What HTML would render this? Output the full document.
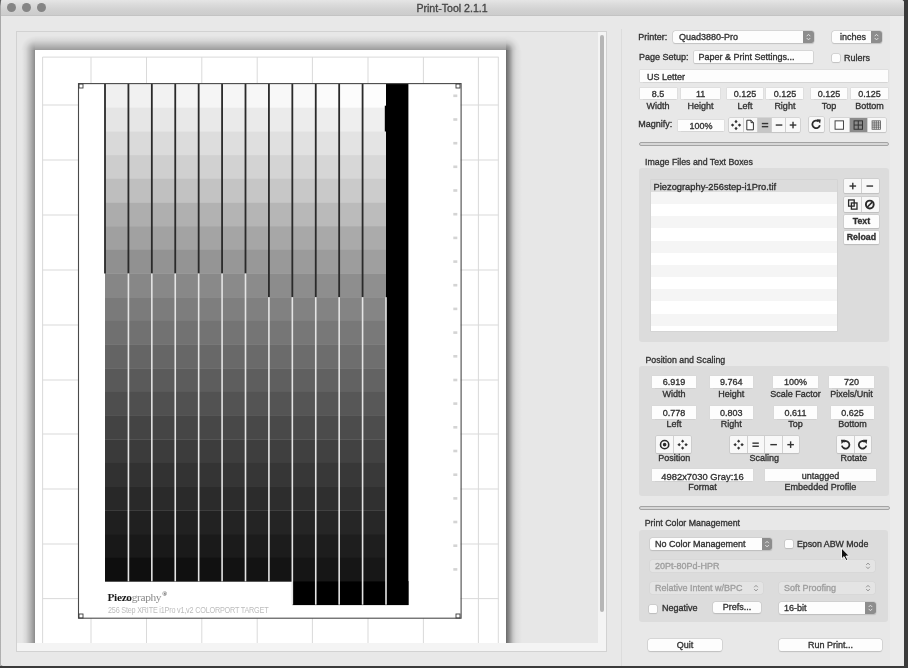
<!DOCTYPE html>
<html><head><meta charset="utf-8"><style>
*{box-sizing:border-box;margin:0;padding:0}
html,body{width:908px;height:668px;overflow:hidden;background:#3b3b3b;font-family:"Liberation Sans",sans-serif;position:relative}
.abs{position:absolute}
.t{position:absolute;white-space:nowrap;line-height:1;-webkit-text-stroke:0.32px currentColor}
#rp{position:absolute;left:0;top:0;width:908px;height:668px;will-change:transform}
</style></head><body>
<div id="rp"><div class="abs" style="left:0;top:0;width:904px;height:666px;background:#e8e8e8;border-radius:3px"></div>
<div class="abs" style="left:0.0px;top:0.0px;width:904.0px;height:16.0px;background:linear-gradient(#e5e5e5 0px,#dadada 5px,#d1d1d1 10px,#cccccc 15px);border-radius:3px 3px 0 0;border-bottom:1px solid #c3c3c3"></div>
<div class="abs" style="left:0.0px;top:0.0px;width:1.2px;height:666.0px;background:linear-gradient(#555 0px,#a8a8a8 6px,#b0b0b0)"></div>
<div class="abs" style="left:890.0px;top:16.0px;width:13.8px;height:650.0px;background:#ebebeb"></div>
<div class="abs" style="left:6.6px;top:2.6px;width:9.2px;height:9.2px;border-radius:50%;background:#858585"></div>
<div class="abs" style="left:21.9px;top:2.6px;width:9.2px;height:9.2px;border-radius:50%;background:#858585"></div>
<div class="abs" style="left:37.2px;top:2.6px;width:9.2px;height:9.2px;border-radius:50%;background:#858585"></div>
<div class="t" style="left:416.4px;top:2.5px;font-size:10.6px;color:#454545;font-weight:400;">Print-Tool 2.1.1</div>
<div class="abs" style="left:16.0px;top:31.0px;width:591.0px;height:621.0px;border:1px solid #d2d2d2;background:#f4f4f4"></div>
<div class="abs" style="left:17.0px;top:32.0px;width:581.0px;height:611.0px;background:#e7e7e7"></div>
<div class="abs" style="left:599.7px;top:34.5px;width:4.5px;height:577.3px;background:#b6b6b6;border-radius:2.3px"></div>
<div class="abs" style="left:620.5px;top:29.0px;width:1.8px;height:637.0px;background:#dcdcdc"></div>
<div class="abs" style="left:17px;top:32px;width:581px;height:611px;overflow:hidden"><div class="abs" style="left:18px;top:17.6px;width:471px;height:620px;background:#fff"></div><div class="abs" style="left:489px;top:17.6px;width:16px;height:600px;background:linear-gradient(to right,rgba(0,0,0,0.54) 0px,rgba(0,0,0,0.40) 3px,rgba(0,0,0,0.27) 5px,rgba(0,0,0,0.143) 7px,rgba(0,0,0,0.052) 10px,rgba(0,0,0,0.017) 14px,rgba(0,0,0,0) 16px)"></div><div class="abs" style="left:4px;top:17.6px;width:14px;height:600px;background:linear-gradient(to left,rgba(0,0,0,0.40) 0px,rgba(0,0,0,0.24) 4px,rgba(0,0,0,0.065) 9px,rgba(0,0,0,0) 13px)"></div><div class="abs" style="left:18px;top:2.6px;width:471px;height:15px;background:linear-gradient(to top,rgba(0,0,0,0.33) 0px,rgba(0,0,0,0.20) 4.6px,rgba(0,0,0,0.065) 9.6px,rgba(0,0,0,0) 14.6px)"></div><div class="abs" style="left:4px;top:2.6px;width:14px;height:15px;background:radial-gradient(circle at 100% 100%,rgba(0,0,0,0.36) 0px,rgba(0,0,0,0.22) 4.3px,rgba(0,0,0,0.065) 9.3px,rgba(0,0,0,0) 14px)"></div><div class="abs" style="left:489px;top:2.6px;width:16px;height:15px;background:radial-gradient(circle at 0% 100%,rgba(0,0,0,0.45) 0px,rgba(0,0,0,0.30) 4px,rgba(0,0,0,0.14) 7px,rgba(0,0,0,0.04) 11px,rgba(0,0,0,0) 15px)"></div>
<svg class="abs" style="left:-17px;top:-32px" width="908" height="668" viewBox="0 0 908 668"><rect x="42.1" y="57" width="1" height="586" fill="#dadada"/><rect x="90.5" y="57" width="1" height="586" fill="#dadada"/><rect x="146.0" y="57" width="1" height="586" fill="#dadada"/><rect x="201.3" y="57" width="1" height="586" fill="#dadada"/><rect x="256.7" y="57" width="1" height="586" fill="#dadada"/><rect x="311.9" y="57" width="1" height="586" fill="#dadada"/><rect x="367.5" y="57" width="1" height="586" fill="#dadada"/><rect x="422.9" y="57" width="1" height="586" fill="#dadada"/><rect x="477.9" y="57" width="1" height="586" fill="#dadada"/><rect x="497.8" y="57" width="1" height="586" fill="#dadada"/><rect x="42.6" y="56.6" width="456" height="1" fill="#dadada"/><rect x="42.6" y="104.5" width="456" height="1" fill="#dadada"/><rect x="42.6" y="159.5" width="456" height="1" fill="#dadada"/><rect x="42.6" y="214.5" width="456" height="1" fill="#dadada"/><rect x="42.6" y="269.5" width="456" height="1" fill="#dadada"/><rect x="42.6" y="324.5" width="456" height="1" fill="#dadada"/><rect x="42.6" y="379.5" width="456" height="1" fill="#dadada"/><rect x="42.6" y="433.5" width="456" height="1" fill="#dadada"/><rect x="42.6" y="488.5" width="456" height="1" fill="#dadada"/><rect x="42.6" y="543.5" width="456" height="1" fill="#dadada"/><rect x="42.6" y="598.1" width="456" height="1" fill="#dadada"/><rect x="78.5" y="83.5" width="382" height="534.5" fill="#fff"/><rect x="105.00" y="84.00" width="23.72" height="23.99" fill="rgb(240,240,240)"/><rect x="128.42" y="84.00" width="23.72" height="23.99" fill="rgb(241,241,241)"/><rect x="151.83" y="84.00" width="23.72" height="23.99" fill="rgb(242,242,242)"/><rect x="175.25" y="84.00" width="23.72" height="23.99" fill="rgb(244,244,244)"/><rect x="198.67" y="84.00" width="23.72" height="23.99" fill="rgb(245,245,245)"/><rect x="222.08" y="84.00" width="23.72" height="23.99" fill="rgb(246,246,246)"/><rect x="245.50" y="84.00" width="23.72" height="23.99" fill="rgb(247,247,247)"/><rect x="268.92" y="84.00" width="23.72" height="23.99" fill="rgb(248,248,248)"/><rect x="292.33" y="84.00" width="23.72" height="23.99" fill="rgb(249,249,249)"/><rect x="315.75" y="84.00" width="23.72" height="23.99" fill="rgb(251,251,251)"/><rect x="339.17" y="84.00" width="23.72" height="23.99" fill="rgb(252,252,252)"/><rect x="362.58" y="84.00" width="23.72" height="23.99" fill="rgb(253,253,253)"/><rect x="105.00" y="107.69" width="23.72" height="23.99" fill="rgb(229,229,229)"/><rect x="128.42" y="107.69" width="23.72" height="23.99" fill="rgb(230,230,230)"/><rect x="151.83" y="107.69" width="23.72" height="23.99" fill="rgb(231,231,231)"/><rect x="175.25" y="107.69" width="23.72" height="23.99" fill="rgb(232,232,232)"/><rect x="198.67" y="107.69" width="23.72" height="23.99" fill="rgb(233,233,233)"/><rect x="222.08" y="107.69" width="23.72" height="23.99" fill="rgb(234,234,234)"/><rect x="245.50" y="107.69" width="23.72" height="23.99" fill="rgb(234,234,234)"/><rect x="268.92" y="107.69" width="23.72" height="23.99" fill="rgb(235,235,235)"/><rect x="292.33" y="107.69" width="23.72" height="23.99" fill="rgb(236,236,236)"/><rect x="315.75" y="107.69" width="23.72" height="23.99" fill="rgb(237,237,237)"/><rect x="339.17" y="107.69" width="23.72" height="23.99" fill="rgb(238,238,238)"/><rect x="362.58" y="107.69" width="23.72" height="23.99" fill="rgb(239,239,239)"/><rect x="105.00" y="131.37" width="23.72" height="23.99" fill="rgb(217,217,217)"/><rect x="128.42" y="131.37" width="23.72" height="23.99" fill="rgb(218,218,218)"/><rect x="151.83" y="131.37" width="23.72" height="23.99" fill="rgb(219,219,219)"/><rect x="175.25" y="131.37" width="23.72" height="23.99" fill="rgb(220,220,220)"/><rect x="198.67" y="131.37" width="23.72" height="23.99" fill="rgb(221,221,221)"/><rect x="222.08" y="131.37" width="23.72" height="23.99" fill="rgb(222,222,222)"/><rect x="245.50" y="131.37" width="23.72" height="23.99" fill="rgb(223,223,223)"/><rect x="268.92" y="131.37" width="23.72" height="23.99" fill="rgb(224,224,224)"/><rect x="292.33" y="131.37" width="23.72" height="23.99" fill="rgb(225,225,225)"/><rect x="315.75" y="131.37" width="23.72" height="23.99" fill="rgb(226,226,226)"/><rect x="339.17" y="131.37" width="23.72" height="23.99" fill="rgb(227,227,227)"/><rect x="362.58" y="131.37" width="23.72" height="23.99" fill="rgb(228,228,228)"/><rect x="105.00" y="155.06" width="23.72" height="23.99" fill="rgb(205,205,205)"/><rect x="128.42" y="155.06" width="23.72" height="23.99" fill="rgb(206,206,206)"/><rect x="151.83" y="155.06" width="23.72" height="23.99" fill="rgb(207,207,207)"/><rect x="175.25" y="155.06" width="23.72" height="23.99" fill="rgb(208,208,208)"/><rect x="198.67" y="155.06" width="23.72" height="23.99" fill="rgb(209,209,209)"/><rect x="222.08" y="155.06" width="23.72" height="23.99" fill="rgb(210,210,210)"/><rect x="245.50" y="155.06" width="23.72" height="23.99" fill="rgb(211,211,211)"/><rect x="268.92" y="155.06" width="23.72" height="23.99" fill="rgb(212,212,212)"/><rect x="292.33" y="155.06" width="23.72" height="23.99" fill="rgb(213,213,213)"/><rect x="315.75" y="155.06" width="23.72" height="23.99" fill="rgb(214,214,214)"/><rect x="339.17" y="155.06" width="23.72" height="23.99" fill="rgb(215,215,215)"/><rect x="362.58" y="155.06" width="23.72" height="23.99" fill="rgb(216,216,216)"/><rect x="105.00" y="178.74" width="23.72" height="23.99" fill="rgb(190,190,190)"/><rect x="128.42" y="178.74" width="23.72" height="23.99" fill="rgb(191,191,191)"/><rect x="151.83" y="178.74" width="23.72" height="23.99" fill="rgb(192,192,192)"/><rect x="175.25" y="178.74" width="23.72" height="23.99" fill="rgb(194,194,194)"/><rect x="198.67" y="178.74" width="23.72" height="23.99" fill="rgb(195,195,195)"/><rect x="222.08" y="178.74" width="23.72" height="23.99" fill="rgb(196,196,196)"/><rect x="245.50" y="178.74" width="23.72" height="23.99" fill="rgb(198,198,198)"/><rect x="268.92" y="178.74" width="23.72" height="23.99" fill="rgb(199,199,199)"/><rect x="292.33" y="178.74" width="23.72" height="23.99" fill="rgb(200,200,200)"/><rect x="315.75" y="178.74" width="23.72" height="23.99" fill="rgb(201,201,201)"/><rect x="339.17" y="178.74" width="23.72" height="23.99" fill="rgb(202,202,202)"/><rect x="362.58" y="178.74" width="23.72" height="23.99" fill="rgb(204,204,204)"/><rect x="105.00" y="202.43" width="23.72" height="23.99" fill="rgb(172,172,172)"/><rect x="128.42" y="202.43" width="23.72" height="23.99" fill="rgb(174,174,174)"/><rect x="151.83" y="202.43" width="23.72" height="23.99" fill="rgb(175,175,175)"/><rect x="175.25" y="202.43" width="23.72" height="23.99" fill="rgb(176,176,176)"/><rect x="198.67" y="202.43" width="23.72" height="23.99" fill="rgb(178,178,178)"/><rect x="222.08" y="202.43" width="23.72" height="23.99" fill="rgb(180,180,180)"/><rect x="245.50" y="202.43" width="23.72" height="23.99" fill="rgb(181,181,181)"/><rect x="268.92" y="202.43" width="23.72" height="23.99" fill="rgb(182,182,182)"/><rect x="292.33" y="202.43" width="23.72" height="23.99" fill="rgb(184,184,184)"/><rect x="315.75" y="202.43" width="23.72" height="23.99" fill="rgb(186,186,186)"/><rect x="339.17" y="202.43" width="23.72" height="23.99" fill="rgb(187,187,187)"/><rect x="362.58" y="202.43" width="23.72" height="23.99" fill="rgb(188,188,188)"/><rect x="105.00" y="226.11" width="23.72" height="23.99" fill="rgb(160,160,160)"/><rect x="128.42" y="226.11" width="23.72" height="23.99" fill="rgb(161,161,161)"/><rect x="151.83" y="226.11" width="23.72" height="23.99" fill="rgb(162,162,162)"/><rect x="175.25" y="226.11" width="23.72" height="23.99" fill="rgb(163,163,163)"/><rect x="198.67" y="226.11" width="23.72" height="23.99" fill="rgb(164,164,164)"/><rect x="222.08" y="226.11" width="23.72" height="23.99" fill="rgb(165,165,165)"/><rect x="245.50" y="226.11" width="23.72" height="23.99" fill="rgb(166,166,166)"/><rect x="268.92" y="226.11" width="23.72" height="23.99" fill="rgb(167,167,167)"/><rect x="292.33" y="226.11" width="23.72" height="23.99" fill="rgb(168,168,168)"/><rect x="315.75" y="226.11" width="23.72" height="23.99" fill="rgb(169,169,169)"/><rect x="339.17" y="226.11" width="23.72" height="23.99" fill="rgb(170,170,170)"/><rect x="362.58" y="226.11" width="23.72" height="23.99" fill="rgb(171,171,171)"/><rect x="105.00" y="249.80" width="23.72" height="23.99" fill="rgb(144,144,144)"/><rect x="128.42" y="249.80" width="23.72" height="23.99" fill="rgb(145,145,145)"/><rect x="151.83" y="249.80" width="23.72" height="23.99" fill="rgb(147,147,147)"/><rect x="175.25" y="249.80" width="23.72" height="23.99" fill="rgb(148,148,148)"/><rect x="198.67" y="249.80" width="23.72" height="23.99" fill="rgb(149,149,149)"/><rect x="222.08" y="249.80" width="23.72" height="23.99" fill="rgb(151,151,151)"/><rect x="245.50" y="249.80" width="23.72" height="23.99" fill="rgb(152,152,152)"/><rect x="268.92" y="249.80" width="23.72" height="23.99" fill="rgb(153,153,153)"/><rect x="292.33" y="249.80" width="23.72" height="23.99" fill="rgb(155,155,155)"/><rect x="315.75" y="249.80" width="23.72" height="23.99" fill="rgb(156,156,156)"/><rect x="339.17" y="249.80" width="23.72" height="23.99" fill="rgb(157,157,157)"/><rect x="362.58" y="249.80" width="23.72" height="23.99" fill="rgb(159,159,159)"/><rect x="105.00" y="273.49" width="23.72" height="23.99" fill="rgb(134,134,134)"/><rect x="128.42" y="273.49" width="23.72" height="23.99" fill="rgb(135,135,135)"/><rect x="151.83" y="273.49" width="23.72" height="23.99" fill="rgb(136,136,136)"/><rect x="175.25" y="273.49" width="23.72" height="23.99" fill="rgb(136,136,136)"/><rect x="198.67" y="273.49" width="23.72" height="23.99" fill="rgb(137,137,137)"/><rect x="222.08" y="273.49" width="23.72" height="23.99" fill="rgb(138,138,138)"/><rect x="245.50" y="273.49" width="23.72" height="23.99" fill="rgb(139,139,139)"/><rect x="268.92" y="273.49" width="23.72" height="23.99" fill="rgb(140,140,140)"/><rect x="292.33" y="273.49" width="23.72" height="23.99" fill="rgb(141,141,141)"/><rect x="315.75" y="273.49" width="23.72" height="23.99" fill="rgb(142,142,142)"/><rect x="339.17" y="273.49" width="23.72" height="23.99" fill="rgb(142,142,142)"/><rect x="362.58" y="273.49" width="23.72" height="23.99" fill="rgb(143,143,143)"/><rect x="105.00" y="297.17" width="23.72" height="23.99" fill="rgb(122,122,122)"/><rect x="128.42" y="297.17" width="23.72" height="23.99" fill="rgb(123,123,123)"/><rect x="151.83" y="297.17" width="23.72" height="23.99" fill="rgb(124,124,124)"/><rect x="175.25" y="297.17" width="23.72" height="23.99" fill="rgb(125,125,125)"/><rect x="198.67" y="297.17" width="23.72" height="23.99" fill="rgb(126,126,126)"/><rect x="222.08" y="297.17" width="23.72" height="23.99" fill="rgb(127,127,127)"/><rect x="245.50" y="297.17" width="23.72" height="23.99" fill="rgb(128,128,128)"/><rect x="268.92" y="297.17" width="23.72" height="23.99" fill="rgb(129,129,129)"/><rect x="292.33" y="297.17" width="23.72" height="23.99" fill="rgb(130,130,130)"/><rect x="315.75" y="297.17" width="23.72" height="23.99" fill="rgb(131,131,131)"/><rect x="339.17" y="297.17" width="23.72" height="23.99" fill="rgb(132,132,132)"/><rect x="362.58" y="297.17" width="23.72" height="23.99" fill="rgb(133,133,133)"/><rect x="105.00" y="320.86" width="23.72" height="23.99" fill="rgb(112,112,112)"/><rect x="128.42" y="320.86" width="23.72" height="23.99" fill="rgb(113,113,113)"/><rect x="151.83" y="320.86" width="23.72" height="23.99" fill="rgb(114,114,114)"/><rect x="175.25" y="320.86" width="23.72" height="23.99" fill="rgb(114,114,114)"/><rect x="198.67" y="320.86" width="23.72" height="23.99" fill="rgb(115,115,115)"/><rect x="222.08" y="320.86" width="23.72" height="23.99" fill="rgb(116,116,116)"/><rect x="245.50" y="320.86" width="23.72" height="23.99" fill="rgb(117,117,117)"/><rect x="268.92" y="320.86" width="23.72" height="23.99" fill="rgb(118,118,118)"/><rect x="292.33" y="320.86" width="23.72" height="23.99" fill="rgb(119,119,119)"/><rect x="315.75" y="320.86" width="23.72" height="23.99" fill="rgb(120,120,120)"/><rect x="339.17" y="320.86" width="23.72" height="23.99" fill="rgb(120,120,120)"/><rect x="362.58" y="320.86" width="23.72" height="23.99" fill="rgb(121,121,121)"/><rect x="105.00" y="344.54" width="23.72" height="23.99" fill="rgb(100,100,100)"/><rect x="128.42" y="344.54" width="23.72" height="23.99" fill="rgb(101,101,101)"/><rect x="151.83" y="344.54" width="23.72" height="23.99" fill="rgb(102,102,102)"/><rect x="175.25" y="344.54" width="23.72" height="23.99" fill="rgb(103,103,103)"/><rect x="198.67" y="344.54" width="23.72" height="23.99" fill="rgb(104,104,104)"/><rect x="222.08" y="344.54" width="23.72" height="23.99" fill="rgb(105,105,105)"/><rect x="245.50" y="344.54" width="23.72" height="23.99" fill="rgb(106,106,106)"/><rect x="268.92" y="344.54" width="23.72" height="23.99" fill="rgb(107,107,107)"/><rect x="292.33" y="344.54" width="23.72" height="23.99" fill="rgb(108,108,108)"/><rect x="315.75" y="344.54" width="23.72" height="23.99" fill="rgb(109,109,109)"/><rect x="339.17" y="344.54" width="23.72" height="23.99" fill="rgb(110,110,110)"/><rect x="362.58" y="344.54" width="23.72" height="23.99" fill="rgb(111,111,111)"/><rect x="105.00" y="368.23" width="23.72" height="23.99" fill="rgb(89,89,89)"/><rect x="128.42" y="368.23" width="23.72" height="23.99" fill="rgb(90,90,90)"/><rect x="151.83" y="368.23" width="23.72" height="23.99" fill="rgb(91,91,91)"/><rect x="175.25" y="368.23" width="23.72" height="23.99" fill="rgb(92,92,92)"/><rect x="198.67" y="368.23" width="23.72" height="23.99" fill="rgb(93,93,93)"/><rect x="222.08" y="368.23" width="23.72" height="23.99" fill="rgb(94,94,94)"/><rect x="245.50" y="368.23" width="23.72" height="23.99" fill="rgb(94,94,94)"/><rect x="268.92" y="368.23" width="23.72" height="23.99" fill="rgb(95,95,95)"/><rect x="292.33" y="368.23" width="23.72" height="23.99" fill="rgb(96,96,96)"/><rect x="315.75" y="368.23" width="23.72" height="23.99" fill="rgb(97,97,97)"/><rect x="339.17" y="368.23" width="23.72" height="23.99" fill="rgb(98,98,98)"/><rect x="362.58" y="368.23" width="23.72" height="23.99" fill="rgb(99,99,99)"/><rect x="105.00" y="391.91" width="23.72" height="23.99" fill="rgb(78,78,78)"/><rect x="128.42" y="391.91" width="23.72" height="23.99" fill="rgb(79,79,79)"/><rect x="151.83" y="391.91" width="23.72" height="23.99" fill="rgb(80,80,80)"/><rect x="175.25" y="391.91" width="23.72" height="23.99" fill="rgb(81,81,81)"/><rect x="198.67" y="391.91" width="23.72" height="23.99" fill="rgb(82,82,82)"/><rect x="222.08" y="391.91" width="23.72" height="23.99" fill="rgb(83,83,83)"/><rect x="245.50" y="391.91" width="23.72" height="23.99" fill="rgb(84,84,84)"/><rect x="268.92" y="391.91" width="23.72" height="23.99" fill="rgb(84,84,84)"/><rect x="292.33" y="391.91" width="23.72" height="23.99" fill="rgb(85,85,85)"/><rect x="315.75" y="391.91" width="23.72" height="23.99" fill="rgb(86,86,86)"/><rect x="339.17" y="391.91" width="23.72" height="23.99" fill="rgb(87,87,87)"/><rect x="362.58" y="391.91" width="23.72" height="23.99" fill="rgb(88,88,88)"/><rect x="105.00" y="415.60" width="23.72" height="23.99" fill="rgb(67,67,67)"/><rect x="128.42" y="415.60" width="23.72" height="23.99" fill="rgb(68,68,68)"/><rect x="151.83" y="415.60" width="23.72" height="23.99" fill="rgb(69,69,69)"/><rect x="175.25" y="415.60" width="23.72" height="23.99" fill="rgb(70,70,70)"/><rect x="198.67" y="415.60" width="23.72" height="23.99" fill="rgb(71,71,71)"/><rect x="222.08" y="415.60" width="23.72" height="23.99" fill="rgb(72,72,72)"/><rect x="245.50" y="415.60" width="23.72" height="23.99" fill="rgb(72,72,72)"/><rect x="268.92" y="415.60" width="23.72" height="23.99" fill="rgb(73,73,73)"/><rect x="292.33" y="415.60" width="23.72" height="23.99" fill="rgb(74,74,74)"/><rect x="315.75" y="415.60" width="23.72" height="23.99" fill="rgb(75,75,75)"/><rect x="339.17" y="415.60" width="23.72" height="23.99" fill="rgb(76,76,76)"/><rect x="362.58" y="415.60" width="23.72" height="23.99" fill="rgb(77,77,77)"/><rect x="105.00" y="439.29" width="23.72" height="23.99" fill="rgb(58,58,58)"/><rect x="128.42" y="439.29" width="23.72" height="23.99" fill="rgb(59,59,59)"/><rect x="151.83" y="439.29" width="23.72" height="23.99" fill="rgb(60,60,60)"/><rect x="175.25" y="439.29" width="23.72" height="23.99" fill="rgb(60,60,60)"/><rect x="198.67" y="439.29" width="23.72" height="23.99" fill="rgb(61,61,61)"/><rect x="222.08" y="439.29" width="23.72" height="23.99" fill="rgb(62,62,62)"/><rect x="245.50" y="439.29" width="23.72" height="23.99" fill="rgb(62,62,62)"/><rect x="268.92" y="439.29" width="23.72" height="23.99" fill="rgb(63,63,63)"/><rect x="292.33" y="439.29" width="23.72" height="23.99" fill="rgb(64,64,64)"/><rect x="315.75" y="439.29" width="23.72" height="23.99" fill="rgb(65,65,65)"/><rect x="339.17" y="439.29" width="23.72" height="23.99" fill="rgb(66,66,66)"/><rect x="362.58" y="439.29" width="23.72" height="23.99" fill="rgb(66,66,66)"/><rect x="105.00" y="462.97" width="23.72" height="23.99" fill="rgb(49,49,49)"/><rect x="128.42" y="462.97" width="23.72" height="23.99" fill="rgb(50,50,50)"/><rect x="151.83" y="462.97" width="23.72" height="23.99" fill="rgb(50,50,50)"/><rect x="175.25" y="462.97" width="23.72" height="23.99" fill="rgb(51,51,51)"/><rect x="198.67" y="462.97" width="23.72" height="23.99" fill="rgb(52,52,52)"/><rect x="222.08" y="462.97" width="23.72" height="23.99" fill="rgb(53,53,53)"/><rect x="245.50" y="462.97" width="23.72" height="23.99" fill="rgb(54,54,54)"/><rect x="268.92" y="462.97" width="23.72" height="23.99" fill="rgb(54,54,54)"/><rect x="292.33" y="462.97" width="23.72" height="23.99" fill="rgb(55,55,55)"/><rect x="315.75" y="462.97" width="23.72" height="23.99" fill="rgb(56,56,56)"/><rect x="339.17" y="462.97" width="23.72" height="23.99" fill="rgb(56,56,56)"/><rect x="362.58" y="462.97" width="23.72" height="23.99" fill="rgb(57,57,57)"/><rect x="105.00" y="486.66" width="23.72" height="23.99" fill="rgb(40,40,40)"/><rect x="128.42" y="486.66" width="23.72" height="23.99" fill="rgb(41,41,41)"/><rect x="151.83" y="486.66" width="23.72" height="23.99" fill="rgb(42,42,42)"/><rect x="175.25" y="486.66" width="23.72" height="23.99" fill="rgb(42,42,42)"/><rect x="198.67" y="486.66" width="23.72" height="23.99" fill="rgb(43,43,43)"/><rect x="222.08" y="486.66" width="23.72" height="23.99" fill="rgb(44,44,44)"/><rect x="245.50" y="486.66" width="23.72" height="23.99" fill="rgb(44,44,44)"/><rect x="268.92" y="486.66" width="23.72" height="23.99" fill="rgb(45,45,45)"/><rect x="292.33" y="486.66" width="23.72" height="23.99" fill="rgb(46,46,46)"/><rect x="315.75" y="486.66" width="23.72" height="23.99" fill="rgb(47,47,47)"/><rect x="339.17" y="486.66" width="23.72" height="23.99" fill="rgb(48,48,48)"/><rect x="362.58" y="486.66" width="23.72" height="23.99" fill="rgb(48,48,48)"/><rect x="105.00" y="510.34" width="23.72" height="23.99" fill="rgb(31,31,31)"/><rect x="128.42" y="510.34" width="23.72" height="23.99" fill="rgb(32,32,32)"/><rect x="151.83" y="510.34" width="23.72" height="23.99" fill="rgb(32,32,32)"/><rect x="175.25" y="510.34" width="23.72" height="23.99" fill="rgb(33,33,33)"/><rect x="198.67" y="510.34" width="23.72" height="23.99" fill="rgb(34,34,34)"/><rect x="222.08" y="510.34" width="23.72" height="23.99" fill="rgb(35,35,35)"/><rect x="245.50" y="510.34" width="23.72" height="23.99" fill="rgb(36,36,36)"/><rect x="268.92" y="510.34" width="23.72" height="23.99" fill="rgb(36,36,36)"/><rect x="292.33" y="510.34" width="23.72" height="23.99" fill="rgb(37,37,37)"/><rect x="315.75" y="510.34" width="23.72" height="23.99" fill="rgb(38,38,38)"/><rect x="339.17" y="510.34" width="23.72" height="23.99" fill="rgb(38,38,38)"/><rect x="362.58" y="510.34" width="23.72" height="23.99" fill="rgb(39,39,39)"/><rect x="105.00" y="534.03" width="23.72" height="23.99" fill="rgb(24,24,24)"/><rect x="128.42" y="534.03" width="23.72" height="23.99" fill="rgb(25,25,25)"/><rect x="151.83" y="534.03" width="23.72" height="23.99" fill="rgb(25,25,25)"/><rect x="175.25" y="534.03" width="23.72" height="23.99" fill="rgb(26,26,26)"/><rect x="198.67" y="534.03" width="23.72" height="23.99" fill="rgb(26,26,26)"/><rect x="222.08" y="534.03" width="23.72" height="23.99" fill="rgb(27,27,27)"/><rect x="245.50" y="534.03" width="23.72" height="23.99" fill="rgb(28,28,28)"/><rect x="268.92" y="534.03" width="23.72" height="23.99" fill="rgb(28,28,28)"/><rect x="292.33" y="534.03" width="23.72" height="23.99" fill="rgb(29,29,29)"/><rect x="315.75" y="534.03" width="23.72" height="23.99" fill="rgb(29,29,29)"/><rect x="339.17" y="534.03" width="23.72" height="23.99" fill="rgb(30,30,30)"/><rect x="362.58" y="534.03" width="23.72" height="23.99" fill="rgb(30,30,30)"/><rect x="105.00" y="557.71" width="23.72" height="23.99" fill="rgb(14,14,14)"/><rect x="128.42" y="557.71" width="23.72" height="23.99" fill="rgb(15,15,15)"/><rect x="151.83" y="557.71" width="23.72" height="23.99" fill="rgb(16,16,16)"/><rect x="175.25" y="557.71" width="23.72" height="23.99" fill="rgb(16,16,16)"/><rect x="198.67" y="557.71" width="23.72" height="23.99" fill="rgb(17,17,17)"/><rect x="222.08" y="557.71" width="23.72" height="23.99" fill="rgb(18,18,18)"/><rect x="245.50" y="557.71" width="23.72" height="23.99" fill="rgb(19,19,19)"/><rect x="268.92" y="557.71" width="23.72" height="23.99" fill="rgb(20,20,20)"/><rect x="292.33" y="557.71" width="23.72" height="23.99" fill="rgb(21,21,21)"/><rect x="315.75" y="557.71" width="23.72" height="23.99" fill="rgb(22,22,22)"/><rect x="339.17" y="557.71" width="23.72" height="23.99" fill="rgb(22,22,22)"/><rect x="362.58" y="557.71" width="23.72" height="23.99" fill="rgb(23,23,23)"/><rect x="292.33" y="581.10" width="116.17" height="24" fill="#000"/><rect x="386" y="83.5" width="22.4" height="521.5" fill="#000"/><rect x="384.8" y="105.7" width="2" height="25.8" fill="#000"/><rect x="104.10" y="83.50" width="1.8" height="189.99" fill="#2a2a2a"/><rect x="127.52" y="83.50" width="1.8" height="189.99" fill="#2a2a2a"/><rect x="127.62" y="273.49" width="1.6" height="307.91" fill="#e4e4e4"/><rect x="150.93" y="83.50" width="1.8" height="189.99" fill="#2a2a2a"/><rect x="151.03" y="273.49" width="1.6" height="307.91" fill="#e4e4e4"/><rect x="174.35" y="83.50" width="1.8" height="189.99" fill="#2a2a2a"/><rect x="174.45" y="273.49" width="1.6" height="307.91" fill="#e4e4e4"/><rect x="197.77" y="83.50" width="1.8" height="189.99" fill="#2a2a2a"/><rect x="197.87" y="273.49" width="1.6" height="307.91" fill="#e4e4e4"/><rect x="221.18" y="83.50" width="1.8" height="189.99" fill="#2a2a2a"/><rect x="221.28" y="273.49" width="1.6" height="307.91" fill="#e4e4e4"/><rect x="244.60" y="83.50" width="1.8" height="189.99" fill="#2a2a2a"/><rect x="244.70" y="273.49" width="1.6" height="307.91" fill="#e4e4e4"/><rect x="268.02" y="83.50" width="1.8" height="213.67" fill="#2a2a2a"/><rect x="268.12" y="297.17" width="1.6" height="284.23" fill="#e4e4e4"/><rect x="291.43" y="83.50" width="1.8" height="213.67" fill="#2a2a2a"/><rect x="291.53" y="297.17" width="1.6" height="307.53" fill="#e4e4e4"/><rect x="314.85" y="83.50" width="1.8" height="213.67" fill="#2a2a2a"/><rect x="314.95" y="297.17" width="1.6" height="307.53" fill="#e4e4e4"/><rect x="338.27" y="83.50" width="1.8" height="213.67" fill="#2a2a2a"/><rect x="338.37" y="297.17" width="1.6" height="307.53" fill="#e4e4e4"/><rect x="361.68" y="83.50" width="1.8" height="213.67" fill="#2a2a2a"/><rect x="361.78" y="297.17" width="1.6" height="307.53" fill="#e4e4e4"/><rect x="385.2" y="297.17" width="1.6" height="307.53" fill="#e4e4e4"/><rect x="78.5" y="83.6" width="382.6" height="534.6" fill="none" stroke="#4a4a4a" stroke-width="1.1"/><rect x="79" y="84" width="4" height="4" fill="none" stroke="#3a3a3a" stroke-width="0.9"/><rect x="456" y="84" width="4" height="4" fill="none" stroke="#3a3a3a" stroke-width="0.9"/><rect x="79" y="614" width="4" height="4" fill="none" stroke="#3a3a3a" stroke-width="0.9"/><rect x="456" y="614" width="4" height="4" fill="none" stroke="#3a3a3a" stroke-width="0.9"/><rect x="453.3" y="94.5" width="4" height="2.6" fill="#d4d4d4"/><rect x="453.3" y="118.2" width="4" height="2.6" fill="#d4d4d4"/><rect x="453.3" y="141.9" width="4" height="2.6" fill="#d4d4d4"/><rect x="453.3" y="165.5" width="4" height="2.6" fill="#d4d4d4"/><rect x="453.3" y="189.2" width="4" height="2.6" fill="#d4d4d4"/><rect x="453.3" y="212.9" width="4" height="2.6" fill="#d4d4d4"/><rect x="453.3" y="236.6" width="4" height="2.6" fill="#d4d4d4"/><rect x="453.3" y="260.3" width="4" height="2.6" fill="#d4d4d4"/><rect x="453.3" y="283.9" width="4" height="2.6" fill="#d4d4d4"/><rect x="453.3" y="307.6" width="4" height="2.6" fill="#d4d4d4"/><rect x="453.3" y="331.3" width="4" height="2.6" fill="#d4d4d4"/><rect x="453.3" y="355.0" width="4" height="2.6" fill="#d4d4d4"/><rect x="453.3" y="378.7" width="4" height="2.6" fill="#d4d4d4"/><rect x="453.3" y="402.3" width="4" height="2.6" fill="#d4d4d4"/><rect x="453.3" y="426.0" width="4" height="2.6" fill="#d4d4d4"/><rect x="453.3" y="449.7" width="4" height="2.6" fill="#d4d4d4"/><rect x="453.3" y="473.4" width="4" height="2.6" fill="#d4d4d4"/><rect x="453.3" y="497.1" width="4" height="2.6" fill="#d4d4d4"/><rect x="453.3" y="520.7" width="4" height="2.6" fill="#d4d4d4"/><rect x="453.3" y="544.4" width="4" height="2.6" fill="#d4d4d4"/><rect x="453.3" y="568.1" width="4" height="2.6" fill="#d4d4d4"/></svg>
<div class="t" style="left:90.5px;top:559.2px;font-family:'Liberation Serif',serif;font-size:11.4px;color:#1a1a1a;-webkit-text-stroke:0;letter-spacing:-0.35px"><b>Piezo</b><span style="color:#8a8a8a">graphy</span><sup style="font-size:6.5px;color:#444;font-weight:bold;margin-left:1px">&reg;</sup></div>
<div class="t" style="left:90.5px;top:575.3px;font-size:8.2px;color:#bdbdbd;letter-spacing:-0.25px;transform:scaleX(0.89);transform-origin:0 0;-webkit-text-stroke:0">256 Step XRITE i1Pro v1,v2 COLORPORT TARGET</div>
</div>
<div class="t" style="left:638.2px;top:32.9px;font-size:9px;color:#303030;font-weight:400;">Printer:</div>
<div class="abs" style="left:673.4px;top:31.0px;width:140.6px;height:12.2px;background:#fdfdfd;border-radius:2.5px;box-shadow:0 0 0 0.6px #c8c8c8, 0 0.6px 1px rgba(0,0,0,0.18)"></div>
<div class="abs" style="left:803.0px;top:31.0px;width:11.0px;height:12.2px;background:#8d8d8d;border-radius:0 2.5px 2.5px 0"></div>
<svg class="abs" style="left:803.0px;top:31.0px" width="11.0" height="12.2"><path d="M3.70 5.20 L5.50 3.30 L7.30 5.20 M3.70 7.00 L5.50 8.90 L7.30 7.00" stroke="#e6e6e6" stroke-width="0.9" fill="none"/></svg>
<div class="t" style="left:679.0px;top:32.7px;font-size:9px;color:#303030;font-weight:400;">Quad3880-Pro</div>
<div class="abs" style="left:831.8px;top:31.0px;width:50.2px;height:12.2px;background:#fdfdfd;border-radius:2.5px;box-shadow:0 0 0 0.6px #c8c8c8, 0 0.6px 1px rgba(0,0,0,0.18)"></div>
<div class="abs" style="left:871.0px;top:31.0px;width:11.0px;height:12.2px;background:#8d8d8d;border-radius:0 2.5px 2.5px 0"></div>
<svg class="abs" style="left:871.0px;top:31.0px" width="11.0" height="12.2"><path d="M3.70 5.20 L5.50 3.30 L7.30 5.20 M3.70 7.00 L5.50 8.90 L7.30 7.00" stroke="#e6e6e6" stroke-width="0.9" fill="none"/></svg>
<div class="t" style="left:840.0px;top:32.7px;font-size:9px;color:#303030;font-weight:400;">inches</div>
<div class="t" style="left:639.0px;top:52.9px;font-size:9px;color:#303030;font-weight:400;">Page Setup:</div>
<div class="abs" style="left:693.7px;top:51.4px;width:119.8px;height:12.0px;background:#fdfdfd;border-radius:1px;box-shadow:0 0 0 0.6px #c8c8c8, 0 0.6px 1px rgba(0,0,0,0.2)"></div>
<div class="t" style="left:653.6px;width:200px;text-align:center;top:53.0px;font-size:9px;color:#303030;font-weight:400;"></div>
<div class="t" style="left:698.4px;top:53.0px;font-size:9px;color:#303030;font-weight:400;">Paper &amp; Print Settings...</div>
<div class="abs" style="left:831.8px;top:54.0px;width:8.0px;height:8.0px;background:#fdfdfd;border-radius:1.5px;box-shadow:0 0 0 0.6px #c0c0c0, 0 0.5px 1px rgba(0,0,0,0.15)"></div>
<div class="t" style="left:844.0px;top:53.7px;font-size:9px;color:#303030;font-weight:400;">Rulers</div>
<div class="abs" style="left:640.0px;top:70.0px;width:247.5px;height:12.2px;background:#fdfdfd;box-shadow:0 0 0 0.5px #d6d6d6, 0 0.5px 0.8px rgba(0,0,0,0.08)"></div>
<div class="t" style="left:647.0px;top:72.5px;font-size:9px;color:#303030;font-weight:400;">US Letter</div>
<div class="abs" style="left:639.6px;top:88.3px;width:37.0px;height:10.9px;background:#fdfdfd;box-shadow:0 0 0 0.5px #d6d6d6, 0 0.5px 0.8px rgba(0,0,0,0.08)"></div>
<div class="t" style="left:558.1px;width:200px;text-align:center;top:90.2px;font-size:9px;color:#303030;font-weight:400;">8.5</div>
<div class="t" style="left:558.1px;width:200px;text-align:center;top:102.0px;font-size:9px;color:#303030;font-weight:400;">Width</div>
<div class="abs" style="left:681.2px;top:88.3px;width:38.8px;height:10.9px;background:#fdfdfd;box-shadow:0 0 0 0.5px #d6d6d6, 0 0.5px 0.8px rgba(0,0,0,0.08)"></div>
<div class="t" style="left:600.6px;width:200px;text-align:center;top:90.2px;font-size:9px;color:#303030;font-weight:400;">11</div>
<div class="t" style="left:600.6px;width:200px;text-align:center;top:102.0px;font-size:9px;color:#303030;font-weight:400;">Height</div>
<div class="abs" style="left:727.0px;top:88.3px;width:36.0px;height:10.9px;background:#fdfdfd;box-shadow:0 0 0 0.5px #d6d6d6, 0 0.5px 0.8px rgba(0,0,0,0.08)"></div>
<div class="t" style="left:645.0px;width:200px;text-align:center;top:90.2px;font-size:9px;color:#303030;font-weight:400;">0.125</div>
<div class="t" style="left:645.0px;width:200px;text-align:center;top:102.0px;font-size:9px;color:#303030;font-weight:400;">Left</div>
<div class="abs" style="left:766.2px;top:88.3px;width:37.3px;height:10.9px;background:#fdfdfd;box-shadow:0 0 0 0.5px #d6d6d6, 0 0.5px 0.8px rgba(0,0,0,0.08)"></div>
<div class="t" style="left:684.9px;width:200px;text-align:center;top:90.2px;font-size:9px;color:#303030;font-weight:400;">0.125</div>
<div class="t" style="left:684.9px;width:200px;text-align:center;top:102.0px;font-size:9px;color:#303030;font-weight:400;">Right</div>
<div class="abs" style="left:810.5px;top:88.3px;width:36.9px;height:10.9px;background:#fdfdfd;box-shadow:0 0 0 0.5px #d6d6d6, 0 0.5px 0.8px rgba(0,0,0,0.08)"></div>
<div class="t" style="left:729.0px;width:200px;text-align:center;top:90.2px;font-size:9px;color:#303030;font-weight:400;">0.125</div>
<div class="t" style="left:729.0px;width:200px;text-align:center;top:102.0px;font-size:9px;color:#303030;font-weight:400;">Top</div>
<div class="abs" style="left:851.2px;top:88.3px;width:36.4px;height:10.9px;background:#fdfdfd;box-shadow:0 0 0 0.5px #d6d6d6, 0 0.5px 0.8px rgba(0,0,0,0.08)"></div>
<div class="t" style="left:769.4px;width:200px;text-align:center;top:90.2px;font-size:9px;color:#303030;font-weight:400;">0.125</div>
<div class="t" style="left:769.4px;width:200px;text-align:center;top:102.0px;font-size:9px;color:#303030;font-weight:400;">Bottom</div>
<div class="t" style="left:638.3px;top:120.2px;font-size:9px;color:#303030;font-weight:400;">Magnify:</div>
<div class="abs" style="left:678.2px;top:119.6px;width:45.6px;height:11.0px;background:#fdfdfd;box-shadow:0 0 0 0.5px #d6d6d6, 0 0.5px 0.8px rgba(0,0,0,0.08)"></div>
<div class="t" style="left:601.0px;width:200px;text-align:center;top:121.5px;font-size:9px;color:#303030;font-weight:400;">100%</div>
<div class="abs" style="left:729.4px;top:117.5px;width:70.3px;height:14.1px;background:#f8f8f8;box-shadow:0 0 0 0.6px #c4c4c4, 0 0.6px 1px rgba(0,0,0,0.15);border-radius:1px"></div>
<svg class="abs" style="left:729.40px;top:117.50px" width="14.06" height="14.10" viewBox="0 0 14.06 14.10"><g transform="translate(7.03,7.05)"><g fill="#333"><path d="M0 -5.2 L1.6 -3.4 L0 -1.8 L-1.6 -3.4Z"/><path d="M0 5.2 L1.6 3.4 L0 1.8 L-1.6 3.4Z"/><path d="M-5.2 0 L-3.4 1.6 L-1.8 0 L-3.4 -1.6Z"/><path d="M5.2 0 L3.4 1.6 L1.8 0 L3.4 -1.6Z"/></g></g></svg>
<div class="abs" style="left:743.2px;top:117.5px;width:0.6px;height:14.1px;background:#d0d0d0"></div>
<svg class="abs" style="left:743.46px;top:117.50px" width="14.06" height="14.10" viewBox="0 0 14.06 14.10"><g transform="translate(7.03,7.05)"><path d="M-3.2 -4.8 H1 L3.4 -2.4 V4.8 H-3.2Z M1 -4.8 V-2.4 H3.4" fill="#fff" stroke="#333" stroke-width="1"/></g></svg>
<div class="abs" style="left:757.5px;top:117.5px;width:14.1px;height:14.1px;background:#c6c6c6"></div>
<div class="abs" style="left:757.2px;top:117.5px;width:0.6px;height:14.1px;background:#d0d0d0"></div>
<svg class="abs" style="left:757.52px;top:117.50px" width="14.06" height="14.10" viewBox="0 0 14.06 14.10"><g transform="translate(7.03,7.05)"><g fill="#333"><rect x="-3.2" y="-2.2" width="6.4" height="1.4"/><rect x="-3.2" y="0.9" width="6.4" height="1.4"/></g></g></svg>
<div class="abs" style="left:771.3px;top:117.5px;width:0.6px;height:14.1px;background:#d0d0d0"></div>
<svg class="abs" style="left:771.58px;top:117.50px" width="14.06" height="14.10" viewBox="0 0 14.06 14.10"><g transform="translate(7.03,7.05)"><rect x="-3.3" y="-0.7" width="6.6" height="1.4" fill="#333"/></g></svg>
<div class="abs" style="left:785.3px;top:117.5px;width:0.6px;height:14.1px;background:#d0d0d0"></div>
<svg class="abs" style="left:785.64px;top:117.50px" width="14.06" height="14.10" viewBox="0 0 14.06 14.10"><g transform="translate(7.03,7.05)"><g fill="#333"><rect x="-3.3" y="-0.7" width="6.6" height="1.4"/><rect x="-0.7" y="-3.3" width="1.4" height="6.6"/></g></g></svg>
<div class="abs" style="left:809.4px;top:117.4px;width:14.3px;height:14.4px;background:#f8f8f8;box-shadow:0 0 0 0.6px #c4c4c4, 0 0.6px 1px rgba(0,0,0,0.15);border-radius:1px"></div>
<svg class="abs" style="left:809.40px;top:117.40px" width="14.30" height="14.40" viewBox="0 0 14.30 14.40"><g transform="translate(7.15,7.20)"><path d="M2.4 -2.8 A3.8 3.8 0 1 0 3.7 1.0" fill="none" stroke="#2a2a2a" stroke-width="1.8"/><path d="M0.4 -5 L4.6 -4.8 L4.0 -0.6Z" fill="#2a2a2a"/></g></svg>
<div class="abs" style="left:830.3px;top:117.5px;width:55.7px;height:14.1px;background:#f8f8f8;box-shadow:0 0 0 0.6px #c4c4c4, 0 0.6px 1px rgba(0,0,0,0.15);border-radius:1px"></div>
<svg class="abs" style="left:830.30px;top:117.50px" width="18.57" height="14.10" viewBox="0 0 18.57 14.10"><g transform="translate(9.28,7.05)"><rect x="-4.2" y="-4.2" width="8.4" height="8.4" fill="#fff" stroke="#444" stroke-width="1"/></g></svg>
<div class="abs" style="left:848.9px;top:117.5px;width:18.6px;height:14.1px;background:#8c8c8c"></div>
<div class="abs" style="left:848.6px;top:117.5px;width:0.6px;height:14.1px;background:#d0d0d0"></div>
<svg class="abs" style="left:848.87px;top:117.50px" width="18.57" height="14.10" viewBox="0 0 18.57 14.10"><g transform="translate(9.28,7.05)"><g fill="none" stroke="#333" stroke-width="1"><rect x="-4.2" y="-4.2" width="8.4" height="8.4"/><path d="M0 -4.2V4.2M-4.2 0H4.2"/></g></g></svg>
<div class="abs" style="left:867.1px;top:117.5px;width:0.6px;height:14.1px;background:#d0d0d0"></div>
<svg class="abs" style="left:867.43px;top:117.50px" width="18.57" height="14.10" viewBox="0 0 18.57 14.10"><g transform="translate(9.28,7.05)"><g fill="none" stroke="#555" stroke-width="0.8"><rect x="-4.2" y="-4.2" width="8.4" height="8.4"/><path d="M-2.1 -4.2V4.2M0 -4.2V4.2M2.1 -4.2V4.2M-4.2 -2.1H4.2M-4.2 0H4.2M-4.2 2.1H4.2"/></g></g></svg>
<div class="abs" style="left:638.5px;top:141.6px;width:250.8px;height:4.0px;background:#d6d6d6;border:1px solid #a3a3a3;border-radius:2px"></div>
<div class="t" style="left:645.0px;top:157.9px;font-size:8.8px;color:#333;font-weight:400;">Image Files and Text Boxes</div>
<div class="abs" style="left:638.8px;top:168.3px;width:250.6px;height:173.3px;background:#dcdcdc;border-radius:3px"></div>
<div class="abs" style="left:651.0px;top:179.5px;width:185.5px;height:151.5px;background:#fff;box-shadow:0 0 0 0.6px #cfcfcf"></div>
<div class="abs" style="left:651.0px;top:179.5px;width:185.5px;height:12.2px;background:#dcdcdc"></div>
<div class="abs" style="left:651.0px;top:191.7px;width:185.5px;height:12.2px;background:#f5f5f5"></div>
<div class="abs" style="left:651.0px;top:216.1px;width:185.5px;height:12.2px;background:#f5f5f5"></div>
<div class="abs" style="left:651.0px;top:240.5px;width:185.5px;height:12.2px;background:#f5f5f5"></div>
<div class="abs" style="left:651.0px;top:264.9px;width:185.5px;height:12.2px;background:#f5f5f5"></div>
<div class="abs" style="left:651.0px;top:289.3px;width:185.5px;height:12.2px;background:#f5f5f5"></div>
<div class="abs" style="left:651.0px;top:313.7px;width:185.5px;height:12.2px;background:#f5f5f5"></div>
<div class="t" style="left:653.6px;top:182.7px;font-size:9.3px;color:#2e2e2e;font-weight:400;">Piezography-256step-i1Pro.tif</div>
<div class="abs" style="left:843.8px;top:179.3px;width:35.2px;height:14.1px;background:#f8f8f8;box-shadow:0 0 0 0.6px #c4c4c4, 0 0.6px 1px rgba(0,0,0,0.15);border-radius:1px"></div>
<svg class="abs" style="left:843.80px;top:179.30px" width="17.60" height="14.10" viewBox="0 0 17.60 14.10"><g transform="translate(8.80,7.05)"><g fill="#333"><rect x="-3.3" y="-0.7" width="6.6" height="1.4"/><rect x="-0.7" y="-3.3" width="1.4" height="6.6"/></g></g></svg>
<div class="abs" style="left:861.1px;top:179.3px;width:0.6px;height:14.1px;background:#d0d0d0"></div>
<svg class="abs" style="left:861.40px;top:179.30px" width="17.60" height="14.10" viewBox="0 0 17.60 14.10"><g transform="translate(8.80,7.05)"><rect x="-3.3" y="-0.7" width="6.6" height="1.4" fill="#333"/></g></svg>
<div class="abs" style="left:843.8px;top:196.6px;width:35.2px;height:15.1px;background:#f8f8f8;box-shadow:0 0 0 0.6px #c4c4c4, 0 0.6px 1px rgba(0,0,0,0.15);border-radius:1px"></div>
<svg class="abs" style="left:843.80px;top:196.60px" width="17.60" height="15.10" viewBox="0 0 17.60 15.10"><g transform="translate(8.80,7.55)"><g fill="none" stroke="#2a2a2a" stroke-width="1.3"><rect x="-4.2" y="-4.6" width="5.6" height="6.2"/><rect x="-1.4" y="-1.6" width="5.6" height="6.2"/></g></g></svg>
<div class="abs" style="left:861.1px;top:196.6px;width:0.6px;height:15.1px;background:#d0d0d0"></div>
<svg class="abs" style="left:861.40px;top:196.60px" width="17.60" height="15.10" viewBox="0 0 17.60 15.10"><g transform="translate(8.80,7.55)"><circle r="3.9" fill="none" stroke="#2a2a2a" stroke-width="1.9"/><path d="M-2.4 2.4 L2.4 -2.4" stroke="#2a2a2a" stroke-width="1.6"/></g></svg>
<div class="abs" style="left:843.8px;top:214.8px;width:35.2px;height:13.2px;background:#fdfdfd;border-radius:1px;box-shadow:0 0 0 0.6px #c8c8c8, 0 0.6px 1px rgba(0,0,0,0.2)"></div>
<div class="t" style="left:761.4px;width:200px;text-align:center;top:217.1px;font-size:8.8px;color:#303030;font-weight:700;">Text</div>
<div class="abs" style="left:843.8px;top:231.2px;width:35.2px;height:12.5px;background:#fdfdfd;border-radius:1px;box-shadow:0 0 0 0.6px #c8c8c8, 0 0.6px 1px rgba(0,0,0,0.2)"></div>
<div class="t" style="left:761.4px;width:200px;text-align:center;top:233.2px;font-size:8.8px;color:#303030;font-weight:700;">Reload</div>
<div class="t" style="left:645.5px;top:356.4px;font-size:8.8px;color:#333;font-weight:400;">Position and Scaling</div>
<div class="abs" style="left:639.0px;top:366.2px;width:250.3px;height:129.8px;background:#dcdcdc;border-radius:3px"></div>
<div class="abs" style="left:652.3px;top:375.7px;width:43.7px;height:11.9px;background:#fdfdfd;box-shadow:0 0 0 0.5px #d6d6d6, 0 0.5px 0.8px rgba(0,0,0,0.08)"></div>
<div class="t" style="left:574.1px;width:200px;text-align:center;top:378.1px;font-size:9px;color:#303030;font-weight:400;">6.919</div>
<div class="t" style="left:574.1px;width:200px;text-align:center;top:389.7px;font-size:9px;color:#303030;font-weight:400;">Width</div>
<div class="abs" style="left:709.7px;top:375.7px;width:43.1px;height:11.9px;background:#fdfdfd;box-shadow:0 0 0 0.5px #d6d6d6, 0 0.5px 0.8px rgba(0,0,0,0.08)"></div>
<div class="t" style="left:631.2px;width:200px;text-align:center;top:378.1px;font-size:9px;color:#303030;font-weight:400;">9.764</div>
<div class="t" style="left:631.2px;width:200px;text-align:center;top:389.7px;font-size:9px;color:#303030;font-weight:400;">Height</div>
<div class="abs" style="left:772.7px;top:375.7px;width:45.3px;height:11.9px;background:#fdfdfd;box-shadow:0 0 0 0.5px #d6d6d6, 0 0.5px 0.8px rgba(0,0,0,0.08)"></div>
<div class="t" style="left:695.4px;width:200px;text-align:center;top:378.1px;font-size:9px;color:#303030;font-weight:400;">100%</div>
<div class="t" style="left:695.4px;width:200px;text-align:center;top:389.7px;font-size:9px;color:#303030;font-weight:400;">Scale Factor</div>
<div class="abs" style="left:828.6px;top:375.7px;width:45.8px;height:11.9px;background:#fdfdfd;box-shadow:0 0 0 0.5px #d6d6d6, 0 0.5px 0.8px rgba(0,0,0,0.08)"></div>
<div class="t" style="left:751.5px;width:200px;text-align:center;top:378.1px;font-size:9px;color:#303030;font-weight:400;">720</div>
<div class="t" style="left:751.5px;width:200px;text-align:center;top:389.7px;font-size:9px;color:#303030;font-weight:400;">Pixels/Unit</div>
<div class="abs" style="left:652.3px;top:406.0px;width:43.7px;height:12.8px;background:#fdfdfd;box-shadow:0 0 0 0.5px #d6d6d6, 0 0.5px 0.8px rgba(0,0,0,0.08)"></div>
<div class="t" style="left:574.1px;width:200px;text-align:center;top:408.8px;font-size:9px;color:#303030;font-weight:400;">0.778</div>
<div class="t" style="left:574.1px;width:200px;text-align:center;top:419.7px;font-size:9px;color:#303030;font-weight:400;">Left</div>
<div class="abs" style="left:709.7px;top:406.0px;width:43.1px;height:12.8px;background:#fdfdfd;box-shadow:0 0 0 0.5px #d6d6d6, 0 0.5px 0.8px rgba(0,0,0,0.08)"></div>
<div class="t" style="left:631.2px;width:200px;text-align:center;top:408.8px;font-size:9px;color:#303030;font-weight:400;">0.803</div>
<div class="t" style="left:631.2px;width:200px;text-align:center;top:419.7px;font-size:9px;color:#303030;font-weight:400;">Right</div>
<div class="abs" style="left:773.6px;top:406.0px;width:43.7px;height:12.8px;background:#fdfdfd;box-shadow:0 0 0 0.5px #d6d6d6, 0 0.5px 0.8px rgba(0,0,0,0.08)"></div>
<div class="t" style="left:695.5px;width:200px;text-align:center;top:408.8px;font-size:9px;color:#303030;font-weight:400;">0.611</div>
<div class="t" style="left:695.5px;width:200px;text-align:center;top:419.7px;font-size:9px;color:#303030;font-weight:400;">Top</div>
<div class="abs" style="left:830.7px;top:406.0px;width:43.7px;height:12.8px;background:#fdfdfd;box-shadow:0 0 0 0.5px #d6d6d6, 0 0.5px 0.8px rgba(0,0,0,0.08)"></div>
<div class="t" style="left:752.5px;width:200px;text-align:center;top:408.8px;font-size:9px;color:#303030;font-weight:400;">0.625</div>
<div class="t" style="left:752.5px;width:200px;text-align:center;top:419.7px;font-size:9px;color:#303030;font-weight:400;">Bottom</div>
<div class="abs" style="left:656.3px;top:435.7px;width:34.5px;height:17.3px;background:#f8f8f8;box-shadow:0 0 0 0.6px #c4c4c4, 0 0.6px 1px rgba(0,0,0,0.15);border-radius:1px"></div>
<svg class="abs" style="left:656.30px;top:435.70px" width="17.25" height="17.30" viewBox="0 0 17.25 17.30"><g transform="translate(8.62,8.65)"><circle r="4.1" fill="none" stroke="#2a2a2a" stroke-width="1.6"/><circle r="1.8" fill="#2a2a2a"/></g></svg>
<div class="abs" style="left:673.2px;top:435.7px;width:0.6px;height:17.3px;background:#d0d0d0"></div>
<svg class="abs" style="left:673.55px;top:435.70px" width="17.25" height="17.30" viewBox="0 0 17.25 17.30"><g transform="translate(8.62,8.65)"><g fill="#333"><path d="M0 -5.2 L1.6 -3.4 L0 -1.8 L-1.6 -3.4Z"/><path d="M0 5.2 L1.6 3.4 L0 1.8 L-1.6 3.4Z"/><path d="M-5.2 0 L-3.4 1.6 L-1.8 0 L-3.4 -1.6Z"/><path d="M5.2 0 L3.4 1.6 L1.8 0 L3.4 -1.6Z"/></g></g></svg>
<div class="t" style="left:574.3px;width:200px;text-align:center;top:454.0px;font-size:9px;color:#303030;font-weight:400;">Position</div>
<div class="abs" style="left:730.2px;top:435.7px;width:69.0px;height:17.3px;background:#f8f8f8;box-shadow:0 0 0 0.6px #c4c4c4, 0 0.6px 1px rgba(0,0,0,0.15);border-radius:1px"></div>
<svg class="abs" style="left:730.20px;top:435.70px" width="17.25" height="17.30" viewBox="0 0 17.25 17.30"><g transform="translate(8.62,8.65)"><g fill="#333"><path d="M0 -5.2 L1.6 -3.4 L0 -1.8 L-1.6 -3.4Z"/><path d="M0 5.2 L1.6 3.4 L0 1.8 L-1.6 3.4Z"/><path d="M-5.2 0 L-3.4 1.6 L-1.8 0 L-3.4 -1.6Z"/><path d="M5.2 0 L3.4 1.6 L1.8 0 L3.4 -1.6Z"/></g></g></svg>
<div class="abs" style="left:747.2px;top:435.7px;width:0.6px;height:17.3px;background:#d0d0d0"></div>
<svg class="abs" style="left:747.45px;top:435.70px" width="17.25" height="17.30" viewBox="0 0 17.25 17.30"><g transform="translate(8.62,8.65)"><g fill="#333"><rect x="-3.2" y="-2.2" width="6.4" height="1.4"/><rect x="-3.2" y="0.9" width="6.4" height="1.4"/></g></g></svg>
<div class="abs" style="left:764.4px;top:435.7px;width:0.6px;height:17.3px;background:#d0d0d0"></div>
<svg class="abs" style="left:764.70px;top:435.70px" width="17.25" height="17.30" viewBox="0 0 17.25 17.30"><g transform="translate(8.62,8.65)"><rect x="-3.3" y="-0.7" width="6.6" height="1.4" fill="#333"/></g></svg>
<div class="abs" style="left:781.7px;top:435.7px;width:0.6px;height:17.3px;background:#d0d0d0"></div>
<svg class="abs" style="left:781.95px;top:435.70px" width="17.25" height="17.30" viewBox="0 0 17.25 17.30"><g transform="translate(8.62,8.65)"><g fill="#333"><rect x="-3.3" y="-0.7" width="6.6" height="1.4"/><rect x="-0.7" y="-3.3" width="1.4" height="6.6"/></g></g></svg>
<div class="t" style="left:664.2px;width:200px;text-align:center;top:454.0px;font-size:9px;color:#303030;font-weight:400;">Scaling</div>
<div class="abs" style="left:836.8px;top:435.7px;width:34.4px;height:17.3px;background:#f8f8f8;box-shadow:0 0 0 0.6px #c4c4c4, 0 0.6px 1px rgba(0,0,0,0.15);border-radius:1px"></div>
<svg class="abs" style="left:836.80px;top:435.70px" width="17.20" height="17.30" viewBox="0 0 17.20 17.30"><g transform="translate(8.60,8.65)"><path d="M-2.4 -2.8 A3.8 3.8 0 1 1 -3.7 1.0" fill="none" stroke="#2a2a2a" stroke-width="1.8"/><path d="M-0.4 -5 L-4.6 -4.8 L-4.0 -0.6Z" fill="#2a2a2a"/></g></svg>
<div class="abs" style="left:853.7px;top:435.7px;width:0.6px;height:17.3px;background:#d0d0d0"></div>
<svg class="abs" style="left:854.00px;top:435.70px" width="17.20" height="17.30" viewBox="0 0 17.20 17.30"><g transform="translate(8.60,8.65)"><path d="M2.4 -2.8 A3.8 3.8 0 1 0 3.7 1.0" fill="none" stroke="#2a2a2a" stroke-width="1.8"/><path d="M0.4 -5 L4.6 -4.8 L4.0 -0.6Z" fill="#2a2a2a"/></g></svg>
<div class="t" style="left:753.7px;width:200px;text-align:center;top:454.0px;font-size:9px;color:#303030;font-weight:400;">Rotate</div>
<div class="abs" style="left:652.3px;top:469.4px;width:100.5px;height:11.8px;background:#fdfdfd;box-shadow:0 0 0 0.5px #d6d6d6, 0 0.5px 0.8px rgba(0,0,0,0.08)"></div>
<div class="t" style="left:602.5px;width:200px;text-align:center;top:471.5px;font-size:9.4px;color:#303030;font-weight:400;">4982x7030 Gray:16</div>
<div class="t" style="left:602.5px;width:200px;text-align:center;top:483.0px;font-size:9px;color:#303030;font-weight:400;">Format</div>
<div class="abs" style="left:764.7px;top:469.4px;width:111.5px;height:11.8px;background:#fdfdfd;box-shadow:0 0 0 0.5px #d6d6d6, 0 0.5px 0.8px rgba(0,0,0,0.08)"></div>
<div class="t" style="left:720.5px;width:200px;text-align:center;top:471.7px;font-size:9px;color:#303030;font-weight:400;">untagged</div>
<div class="t" style="left:720.4px;width:200px;text-align:center;top:483.0px;font-size:9px;color:#303030;font-weight:400;">Embedded Profile</div>
<div class="abs" style="left:639.2px;top:506.2px;width:250.4px;height:4.0px;background:#d6d6d6;border:1px solid #a3a3a3;border-radius:2px"></div>
<div class="t" style="left:644.7px;top:518.8px;font-size:8.8px;color:#333;font-weight:400;">Print Color Management</div>
<div class="abs" style="left:638.6px;top:530.0px;width:249.9px;height:92.0px;background:#dcdcdc;border-radius:3px"></div>
<div class="abs" style="left:650.0px;top:538.3px;width:122.4px;height:12.2px;background:#fdfdfd;border-radius:2.5px;box-shadow:0 0 0 0.6px #c8c8c8, 0 0.6px 1px rgba(0,0,0,0.18)"></div>
<div class="abs" style="left:762.3px;top:538.3px;width:10.1px;height:12.2px;background:#8d8d8d;border-radius:0 2.5px 2.5px 0"></div>
<svg class="abs" style="left:762.3px;top:538.3px" width="10.1" height="12.2"><path d="M3.25 5.20 L5.05 3.30 L6.85 5.20 M3.25 7.00 L5.05 8.90 L6.85 7.00" stroke="#e6e6e6" stroke-width="0.9" fill="none"/></svg>
<div class="t" style="left:655.0px;top:540.0px;font-size:9px;color:#303030;font-weight:400;">No Color Management</div>
<div class="abs" style="left:784.6px;top:540.3px;width:8.0px;height:8.0px;background:#fdfdfd;border-radius:1.5px;box-shadow:0 0 0 0.6px #c0c0c0, 0 0.5px 1px rgba(0,0,0,0.15)"></div>
<div class="t" style="left:796.9px;top:540.4px;font-size:8.8px;color:#303030;font-weight:400;">Epson ABW Mode</div>
<div class="abs" style="left:650.0px;top:560.3px;width:225.0px;height:11.7px;background:#e4e4e4;border-radius:2.5px;box-shadow:0 0 0 0.6px #d4d4d4"></div>
<svg class="abs" style="left:863.0px;top:560.3px" width="10.0" height="11.7"><path d="M3.20 4.95 L5.00 3.05 L6.80 4.95 M3.20 6.75 L5.00 8.65 L6.80 6.75" stroke="#8a8a8a" stroke-width="0.9" fill="none"/></svg>
<div class="t" style="left:655.0px;top:561.8px;font-size:9px;color:#9d9d9d;font-weight:400;">20Pt-80Pd-HPR</div>
<div class="abs" style="left:650.0px;top:582.0px;width:113.2px;height:12.3px;background:#e4e4e4;border-radius:2.5px;box-shadow:0 0 0 0.6px #d4d4d4"></div>
<svg class="abs" style="left:751.2px;top:582.0px" width="10.0" height="12.3"><path d="M3.20 5.25 L5.00 3.35 L6.80 5.25 M3.20 7.05 L5.00 8.95 L6.80 7.05" stroke="#8a8a8a" stroke-width="0.9" fill="none"/></svg>
<div class="t" style="left:655.0px;top:583.8px;font-size:9px;color:#9d9d9d;font-weight:400;">Relative Intent w/BPC</div>
<div class="abs" style="left:779.1px;top:582.0px;width:95.9px;height:12.3px;background:#e4e4e4;border-radius:2.5px;box-shadow:0 0 0 0.6px #d4d4d4"></div>
<svg class="abs" style="left:863.0px;top:582.0px" width="10.0" height="12.3"><path d="M3.20 5.25 L5.00 3.35 L6.80 5.25 M3.20 7.05 L5.00 8.95 L6.80 7.05" stroke="#8a8a8a" stroke-width="0.9" fill="none"/></svg>
<div class="t" style="left:784.0px;top:583.8px;font-size:9px;color:#9d9d9d;font-weight:400;">Soft Proofing</div>
<div class="abs" style="left:649.0px;top:604.7px;width:8.0px;height:8.0px;background:#fdfdfd;border-radius:1.5px;box-shadow:0 0 0 0.6px #c0c0c0, 0 0.5px 1px rgba(0,0,0,0.15)"></div>
<div class="t" style="left:662.1px;top:604.4px;font-size:9px;color:#303030;font-weight:400;">Negative</div>
<div class="abs" style="left:713.3px;top:602.0px;width:47.7px;height:11.3px;background:#fdfdfd;border-radius:2.5px;box-shadow:0 0 0 0.6px #c8c8c8, 0 0.6px 1px rgba(0,0,0,0.2)"></div>
<div class="t" style="left:637.1px;width:200px;text-align:center;top:603.3px;font-size:9px;color:#303030;font-weight:400;">Prefs...</div>
<div class="abs" style="left:778.5px;top:602.0px;width:97.4px;height:11.9px;background:#fdfdfd;border-radius:2.5px;box-shadow:0 0 0 0.6px #c8c8c8, 0 0.6px 1px rgba(0,0,0,0.18)"></div>
<div class="abs" style="left:865.0px;top:602.0px;width:10.9px;height:11.9px;background:#8d8d8d;border-radius:0 2.5px 2.5px 0"></div>
<svg class="abs" style="left:865.0px;top:602.0px" width="10.9" height="11.9"><path d="M3.65 5.05 L5.45 3.15 L7.25 5.05 M3.65 6.85 L5.45 8.75 L7.25 6.85" stroke="#e6e6e6" stroke-width="0.9" fill="none"/></svg>
<div class="t" style="left:784.0px;top:603.6px;font-size:9px;color:#303030;font-weight:400;">16-bit</div>
<div class="abs" style="left:647.8px;top:638.7px;width:74.7px;height:12.3px;background:#fdfdfd;border-radius:2.5px;box-shadow:0 0 0 0.6px #c8c8c8, 0 0.6px 1px rgba(0,0,0,0.2)"></div>
<div class="t" style="left:585.1px;width:200px;text-align:center;top:640.5px;font-size:9px;color:#303030;font-weight:400;">Quit</div>
<div class="abs" style="left:779.4px;top:638.7px;width:102.3px;height:12.3px;background:#fdfdfd;border-radius:2.5px;box-shadow:0 0 0 0.6px #c8c8c8, 0 0.6px 1px rgba(0,0,0,0.2)"></div>
<div class="t" style="left:730.5px;width:200px;text-align:center;top:640.5px;font-size:9px;color:#303030;font-weight:400;">Run Print...</div>
<svg class="abs" style="left:840px;top:547.2px" width="14" height="16"><path d="M1.5 1 L1.5 12 L4 9.6 L6 13.6 L7.8 12.8 L5.9 9 L9.3 9 Z" fill="#111" stroke="#fff" stroke-width="0.9"/></svg></div>
</body></html>
